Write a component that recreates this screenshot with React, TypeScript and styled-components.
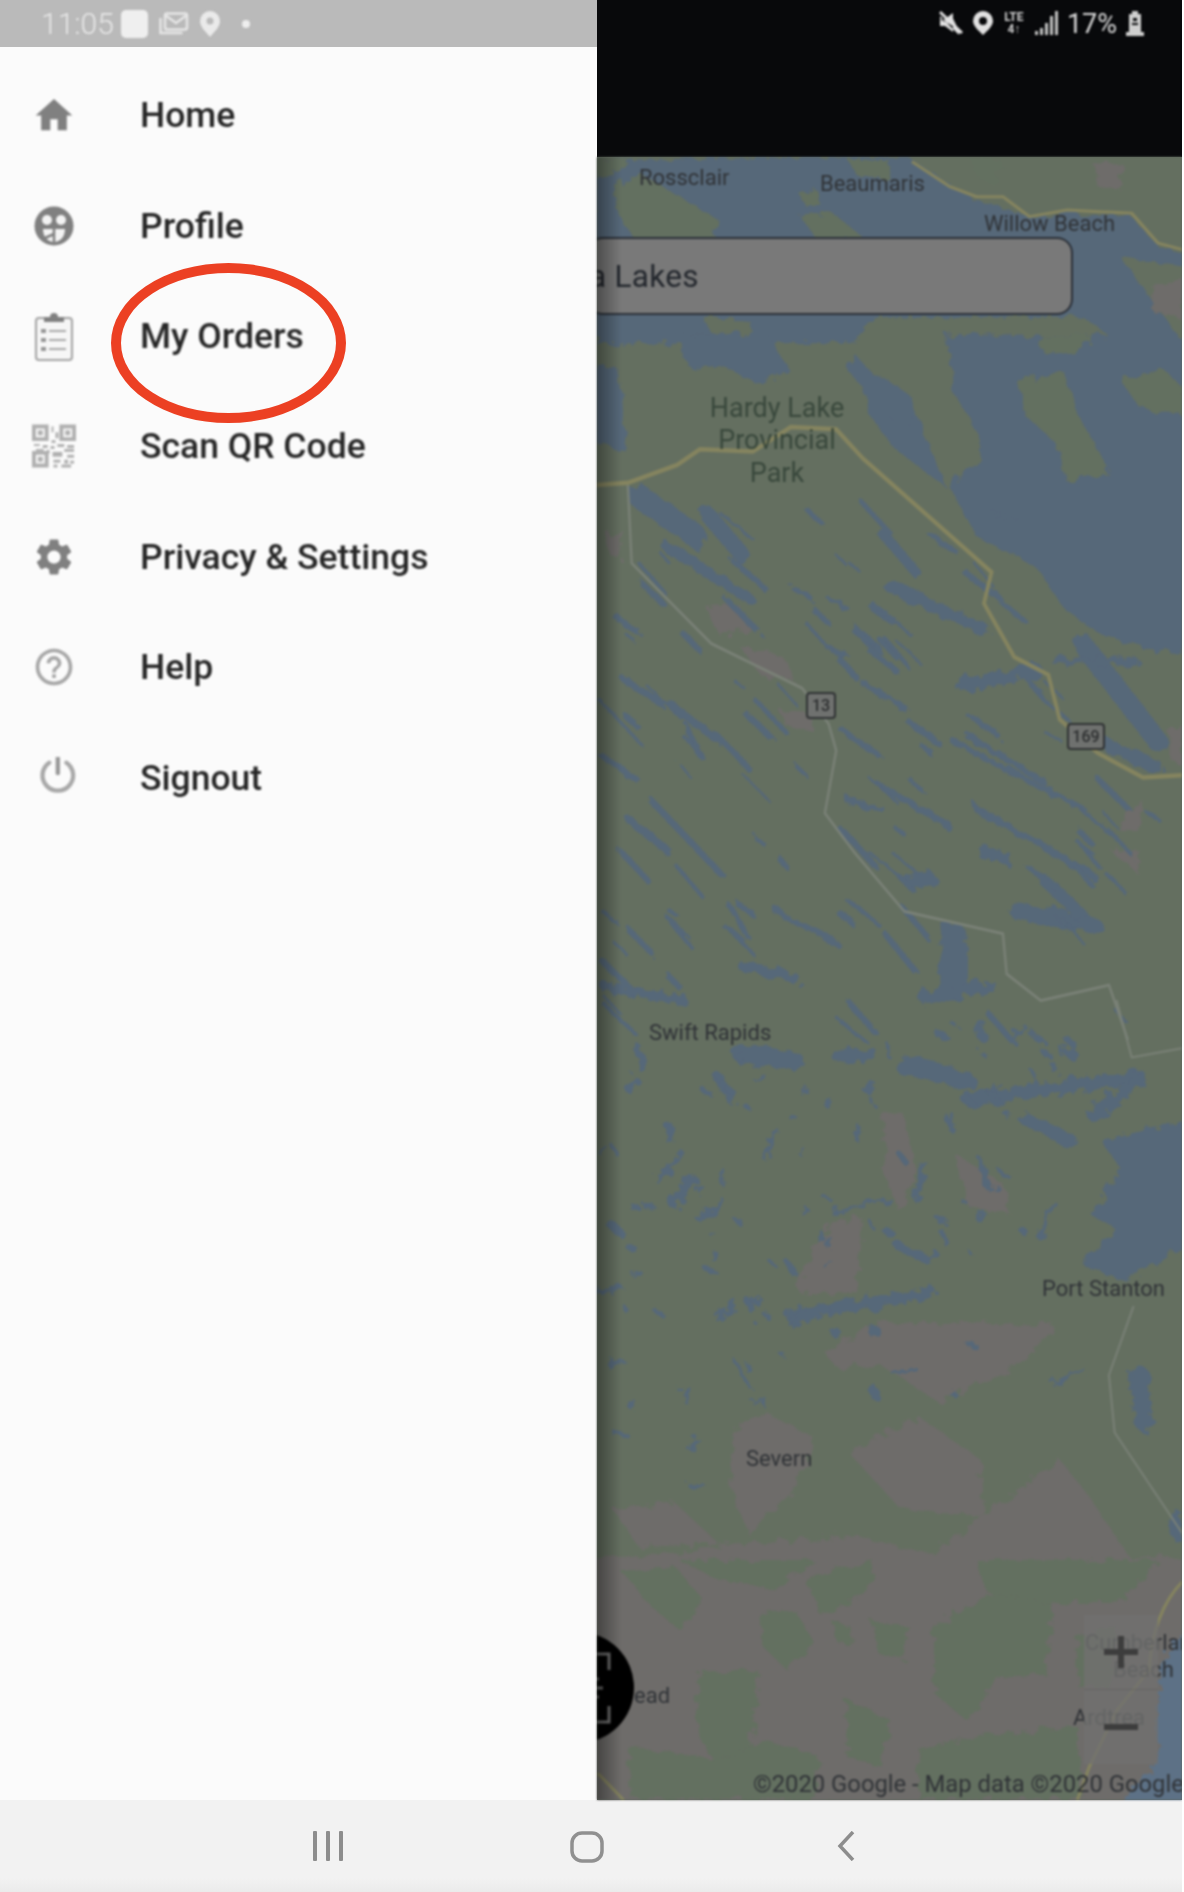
import styled, { createGlobalStyle } from "styled-components";
import { MdHome, MdSettings, MdHelpOutline } from "react-icons/md";
import type { ReactNode } from "react";

const WATER = "#566779";
const LAND = "#646f60";
const GREY = "#6e6c6a";
const ROAD = "#85845f";
const TRACK = "#7b8278";
const ICON = "#808080";

const GlobalStyle = createGlobalStyle`
  html, body { margin: 0; padding: 0; background: #ffffff; }
  body { font-family: Roboto, "Liberation Sans", sans-serif; }
`;

function ProfileIcon() {
  return (
    <svg width="40" height="40" viewBox="0 0 40 40">
      <circle cx="20" cy="20" r="19.5" fill={ICON} />
      <circle cx="13" cy="14" r="5" fill="#f3f3f3" />
      <circle cx="27" cy="14" r="5" fill="#f3f3f3" />
      <path d="M9 23h22c0 8-5 13-11 13S9 31 9 23z" fill="#f3f3f3" />
      <path d="M20 23v14M20 28l-9 4" stroke={ICON} strokeWidth="2.5" fill="none" />
    </svg>
  );
}

function OrdersIcon() {
  return (
    <svg width="40" height="50" viewBox="0 0 40 50">
      <rect x="2" y="7" width="36" height="42" rx="3" fill="#f6f6f6" stroke="#a2a2a2" strokeWidth="2" />
      <path d="M10 11V6h6a4 4 0 0 1 8 0h6v5z" fill={ICON} />
      {[20, 29, 38].map((y) => (
        <g key={y}>
          <rect x="7" y={y - 2} width="5" height="4" fill="#969696" />
          <rect x="15" y={y - 1} width="17" height="2" fill="#a8a8a8" />
        </g>
      ))}
    </svg>
  );
}

function QrIcon() {
  const bits = [
    [20, 2, 2, 6], [24, 8, 3, 6], [20, 16, 4, 3], [2, 20, 6, 2], [11, 21, 5, 3], [19, 22, 4, 3],
    [26, 20, 7, 3], [36, 21, 7, 3], [4, 25, 8, 2], [15, 26, 3, 4], [33, 25, 10, 3], [21, 28, 10, 5],
    [36, 31, 7, 3], [22, 36, 7, 3], [33, 36, 4, 4], [39, 37, 4, 3], [22, 41, 4, 3], [30, 41, 10, 3],
  ];
  return (
    <svg width="45" height="44" viewBox="0 0 45 44" fill="#b0b0b0">
      <path fillRule="evenodd" d="M0 0h17v17H0zM4 4v9h9V4z" />
      <rect x="6" y="6" width="5" height="5" />
      <path fillRule="evenodd" d="M28 0h17v17H28zM32 4v9h9V4z" />
      <rect x="34" y="6" width="5" height="5" />
      <path fillRule="evenodd" d="M0 27h17v17H0zM4 31v9h9v-9z" />
      <rect x="6" y="33" width="5" height="5" />
      {bits.map(([x, y, w, h]) => (
        <rect key={`${x}-${y}`} x={x} y={y} width={w} height={h} />
      ))}
    </svg>
  );
}

function PowerIcon() {
  return (
    <svg width="46" height="42" viewBox="-8 4 46 42" fill="none" stroke="#a8a8a8" strokeWidth="4.5" strokeLinecap="round">
      <path d="M10 9a16 16 0 1 0 18 0" />
      <path d="M19 3v17" stroke="#989898" />
    </svg>
  );
}

const menu: { label: string; icon: ReactNode }[] = [
  { label: "Home", icon: <MdHome size={45} color={ICON} /> },
  { label: "Profile", icon: <ProfileIcon /> },
  { label: "My Orders", icon: <OrdersIcon /> },
  { label: "Scan QR Code", icon: <QrIcon /> },
  { label: "Privacy & Settings", icon: <MdSettings size={48} color={ICON} /> },
  { label: "Help", icon: <MdHelpOutline size={50} color="#a6a6a6" /> },
  { label: "Signout", icon: <PowerIcon /> },
];

// fixed seed, the lakes should land in the same place on every load
function seeded(seed: number) {
  let s = seed;
  return () => {
    s = (s * 16807) % 2147483647;
    return s / 2147483647;
  };
}

// water as [x1, y1, x2, y2, width], in the coordinates of each map section
const upperStreaks = [
  [700, 60, 830, 180, 40], [130, 350, 280, 440, 55], [310, 390, 400, 480, 40], [200, 460, 420, 580, 25],
  [790, 550, 1040, 650, 30], [770, 430, 860, 520, 25], [750, 600, 800, 630, 20], [530, 550, 580, 575, 10],
  [630, 580, 680, 600, 10], [700, 650, 760, 690, 18], [630, 690, 670, 705, 16], [720, 770, 840, 830, 12],
  [980, 775, 1180, 740, 30], [660, 870, 760, 930, 14], [960, 900, 1300, 1050, 14], [1000, 890, 1200, 990, 14],
  [680, 1030, 770, 1050, 14], [770, 1000, 950, 1090, 16], [1020, 1050, 1330, 1200, 16], [1040, 1150, 1100, 1160, 28],
  [840, 1210, 900, 1210, 30], [1130, 1280, 1330, 1310, 40], [1200, 1210, 1300, 1290, 30], [1300, 680, 1500, 900, 50],
  [1350, 900, 1500, 960, 30], [90, 760, 200, 820, 16], [220, 820, 340, 900, 18], [250, 860, 290, 930, 14],
  [330, 880, 420, 960, 14], [30, 810, 140, 910, 8], [30, 930, 130, 990, 14], [160, 1030, 350, 1200, 16],
  [110, 1080, 200, 1140, 20], [230, 1180, 300, 1250, 10], [100, 1320, 160, 1370, 14], [200, 1290, 250, 1330, 10],
  [370, 1270, 420, 1340, 12], [490, 1280, 650, 1350, 14], [400, 1400, 540, 1430, 24], [40, 1450, 250, 1480, 22],
  [960, 1340, 960, 1450, 70], [880, 1470, 1060, 1450, 30], [1230, 720, 1440, 720, 18], [1060, 390, 1120, 400, 10],
];

const lowerStreaks = [
  [400, 140, 540, 160, 50], [660, 150, 740, 140, 35], [830, 170, 990, 210, 50], [1000, 260, 1450, 200, 35],
  [1150, 310, 1270, 370, 35], [1330, 300, 1450, 210, 35], [530, 825, 900, 765, 30], [540, 840, 620, 810, 30],
  [880, 430, 865, 520, 20], [1030, 420, 1050, 490, 14], [640, 555, 790, 520, 10], [1450, 980, 1460, 1100, 50],
  [1220, 1000, 1300, 965, 10], [270, 470, 220, 530, 30], [130, 130, 140, 180, 22], [340, 200, 370, 260, 22],
  [210, 330, 215, 370, 20], [100, 230, 120, 210, 20], [490, 340, 460, 410, 14], [240, 400, 180, 470, 16],
  [370, 820, 330, 830, 10], [60, 1130, 100, 1140, 12], [260, 1170, 285, 1150, 12], [260, 1265, 300, 1270, 10],
  [810, 640, 890, 680, 22], [1190, 620, 1220, 530, 16], [750, 1020, 750, 1030, 24], [650, 870, 650, 870, 26],
  [750, 860, 750, 870, 26], [380, 790, 350, 830, 18], [100, 640, 115, 650, 20], [60, 590, 80, 610, 24],
  [290, 570, 350, 530, 20], [1260, 130, 1280, 150, 28], [1030, 60, 1030, 90, 24], [1550, 1350, 1550, 1400, 30],
  [380, 940, 420, 1010, 8], [1000, 900, 1020, 905, 12], [800, 975, 860, 965, 12], [960, 1030, 960, 1030, 18],
];

// the many small lakes of the shield country, running north-west to south-east
const upperSmall = (() => {
  const r = seeded(4711);
  const out: number[][] = [];
  while (out.length < 90) {
    const x = 30 + r() * 1500;
    const y = 340 + r() * 1200;
    if (y < x * 1.06 - 590) continue;
    const len = 20 + r() * 70;
    out.push([x, y, x + len, y + len * (0.55 + r() * 0.5), 5 + r() * 11]);
  }
  return out;
})();

const lowerSmall = (() => {
  const r = seeded(90210);
  const out: number[][] = [];
  while (out.length < 80) {
    const x = 30 + r() * 1250;
    const y = 60 + r() * 1000;
    if (x > 650 && y > 700) continue;
    const a = r() * 3.14;
    const len = 6 + r() * 30;
    out.push([x, y, x + Math.cos(a) * len, y + Math.sin(a) * len, 6 + r() * 12]);
  }
  return out;
})();

const lowerGrey = [
  "M380 1120L470 1080 590 1140 560 1250 420 1400 370 1270Z",
  "M680 1180L870 1090 1030 1200 1040 1350 820 1330Z",
  "M60 1330L220 1310 340 1420 130 1430Z",
  "M25 1568L200 1450 380 1420 700 1400 900 1450 1240 1200 1320 1300 1500 1568Z",
  "M770 300L830 300 860 440 820 560 780 460Z",
  "M960 400L1090 480 1110 560 1000 540Z",
  "M540 740L640 580 720 570 700 760 560 770Z",
  "M620 920L760 840 1230 850 1130 960 920 1050 760 950 650 960Z",
];

const lowerBlobs = [
  "M500 160L590 150 640 250 570 330 510 260Z",
  "M350 340L500 330 480 560 380 610 340 470Z",
  "M940 200L1080 100 1240 120 1220 340 1100 360 1020 480 940 400Z",
  "M620 60L700 20 790 0 780 80 660 170Z",
  "M160 40L290 20 360 120 300 210 220 130Z",
  "M1040 0L1500 0 1420 120 1230 130 1080 100Z",
  "M170 560L400 600 520 540 650 590 640 716 180 716Z",
  "M900 570L1040 530 1300 500 1310 716 900 716Z",
  "M300 0L640 0 540 90 400 60Z",
  "M690 190L730 200 730 260 690 240Z",
  "M780 180L880 200 860 300 800 280Z",
  "M1300 230L1400 200 1380 380 1300 380Z",
  "M720 420L830 480 810 620 720 590Z",
];

function Lakes({ items }: { items: number[][] }) {
  return (
    <>
      {items.map(([x1, y1, x2, y2, w]) => (
        <line key={`${x1}-${y1}`} x1={x1} y1={y1} x2={x2} y2={y2} stroke={WATER} strokeWidth={w} strokeLinecap="round" />
      ))}
    </>
  );
}

function Shield({ at, w, label }: { at: number[]; w: number; label: string }) {
  return (
    <g>
      <rect x={at[0] - w / 2} y={at[1] - 12} width={w} height={25} rx="3" fill="#6f716f" stroke="#2f3233" strokeWidth="2" />
      <ShieldText x={at[0]} y={at[1] + 6}>{label}</ShieldText>
    </g>
  );
}

function MapArt() {
  return (
    <MapSvg viewBox="597 157 585 1643" width="585" height="1643">
      <defs>
        <filter id="shore" x="-5%" y="-5%" width="110%" height="110%">
          <feTurbulence type="fractalNoise" baseFrequency="0.035" numOctaves="3" seed="7" />
          <feDisplacementMap in="SourceGraphic" scale="38" />
        </filter>
      </defs>
      <rect x="597" y="157" width="585" height="1643" fill={LAND} />

      {/* top of the map, above the search box */}
      <g transform="translate(590 0) scale(.3788 .3333)">
        <g filter="url(#shore)">
          <path
            fill={WATER}
            d="M15 480L840 470 1000 590 1150 650 1260 640 1430 650 1500 740 1568 760 1568 800 1400 770 1568 1030 1400 1030 1300 950 750 950 700 1030 440 1030 420 960 300 950 330 1030 15 1030Z"
          />
          <path fill={LAND} d="M60 560L130 520 250 600 340 660 330 720 120 720 80 650Z" />
          <path fill={LAND} d="M15 480L110 480 40 530 15 530Z" />
          <path fill={LAND} d="M550 580L600 570 605 610 570 620ZM555 650L640 640 720 710 600 720Z" />
          <path fill={LAND} d="M680 480L790 480 780 540 710 530Z" />
          <path fill={LAND} d="M1000 470L1090 480 1070 560 1020 530Z" opacity=".6" />
          <path fill={GREY} d="M1330 490L1410 490 1400 570 1340 560ZM1480 860L1568 830 1568 950 1490 940Z" />
        </g>
        <path fill="none" stroke={ROAD} strokeWidth="9" d="M850 485L950 560 1020 590 1090 590 1160 650 1260 630 1430 640 1500 730 1568 750" />
      </g>

      {/* middle of the map, the shore and the highways */}
      <g transform="translate(590 340) scale(.3788 .4464)">
        <g filter="url(#shore)">
          <path
            fill={WATER}
            d="M940 -10L1580 -10 1580 690 1500 700 1350 660 1250 600 1180 510 1020 440 950 330 1040 250 1000 170 960 120Z"
          />
          <path fill={WATER} d="M230 -10L470 -10 530 70 440 95 340 60 260 60Z" />
          <path fill={WATER} d="M15 50L80 70 95 250 15 230Z" />
          <path fill={LAND} d="M1130 90L1250 70 1290 170 1370 290 1260 320 1230 230 1150 170Z" />
          <path fill={LAND} d="M1400 90L1520 70 1568 110 1568 170 1450 150Z" />
          <path fill={LAND} d="M1190 -10L1330 -10 1280 30 1200 30Z" />
          <path fill={WATER} d="M700 50L840 120 940 330 800 240 740 170Z" />
          <path fill={GREY} d="M310 600L390 590 430 650 340 660ZM400 690L510 710 545 770 450 750ZM500 830L590 840 570 875 520 870ZM1410 1060L1460 1030 1450 1100 1400 1100ZM1370 1140L1460 1150 1440 1190ZM1530 880L1568 860 1568 950 1530 940ZM40 430L90 430 80 490 50 480Z" />
          <Lakes items={upperStreaks} />
          <Lakes items={upperSmall} />
        </g>
        <path
          fill="none"
          stroke={TRACK}
          strokeWidth="6"
          d="M100 325L110 500 320 680 560 780 630 860 650 920 620 1060 700 1150 830 1280 1090 1330 1100 1420 1190 1480 1370 1445 1420 1568"
        />
        <path
          fill="none"
          stroke={ROAD}
          strokeWidth="10"
          d="M15 325L100 320 230 280 290 245 430 250 530 195 650 200 720 265 900 400 1060 520 1040 590 1120 710 1210 750 1240 850 1340 925 1460 980 1568 975"
        />
      </g>

      {/* lower map */}
      <g transform="translate(590 1000) scale(.3788 .3827)">
        <g filter="url(#shore)">
          {lowerGrey.map((d) => (
            <path key={d} d={d} fill={GREY} />
          ))}
          <path fill={WATER} d="M1580 320L1420 350 1350 370 1400 440 1320 560 1390 600 1300 690 1400 735 1580 640Z" />
          <Lakes items={lowerStreaks} />
          <Lakes items={lowerSmall} />
        </g>
        <path fill="none" stroke={TRACK} strokeWidth="5" d="M1390 0L1430 150 1568 125M1435 800L1370 980 1385 1130 1568 1400" />
      </g>

      {/* bottom of the map, mostly grey land */}
      <g transform="translate(560 1560) scale(.398 .3333)">
        <g filter="url(#shore)">
          <rect x="85" y="-10" width="1500" height="740" fill={GREY} />
          {lowerBlobs.map((d) => (
            <path key={d} d={d} fill={LAND} />
          ))}
          <path fill="#5d7186" d="M1580 200L1510 300 1500 610 1410 730 1580 730Z" />
        </g>
        <path fill="none" stroke={ROAD} strokeWidth="8" d="M1568 60Q1490 150 1480 330L1400 450 1330 620 1300 720M95 640L160 720" />
      </g>

      <Shield at={[821, 705]} w={28} label="13" />
      <Shield at={[1086, 736]} w={36} label="169" />

      <MapText x="639" y="185" size={22}>Rossclair</MapText>
      <MapText x="820" y="191" size={22}>Beaumaris</MapText>
      <MapText x="984" y="231" size={22}>Willow Beach</MapText>
      <ParkText x="777" y="417">Hardy Lake</ParkText>
      <ParkText x="777" y="449">Provincial</ParkText>
      <ParkText x="777" y="482">Park</ParkText>
      <MapText x="649" y="1040" size={22}>Swift Rapids</MapText>
      <MapText x="1042" y="1296" size={22}>Port Stanton</MapText>
      <MapText x="746" y="1466" size={22}>Severn</MapText>
      <MapText x="634" y="1703" size={22}>ead</MapText>
      <MapText x="1085" y="1650" size={22}>Cumberland</MapText>
      <MapText x="1113" y="1677" size={22}>Beach</MapText>
      <MapText x="1073" y="1725" size={22}>Ardtrea</MapText>
      <MapText x="753" y="1792" size={23.8}>©2020 Google - Map data ©2020 Google</MapText>
    </MapSvg>
  );
}

export default function App() {
  return (
    <>
      <GlobalStyle />
      <Screen>
        <Content>
          <Drawer>
            <DrawerStatus>
              <Clock>11:05</Clock>
              <StatusSquare />
              <svg width="30" height="23" viewBox="0 0 30 23" fill="none" stroke="#e6e6e6" strokeWidth="2.5">
                <rect x="6" y="1.500" width="22" height="16" rx="2" />
                <path d="M6 3l11 8 11-8" />
                <path d="M1.500 6v15h22" />
              </svg>
              <PinGap>
                <svg width="20" height="26" viewBox="0 0 20 26">
                  <path fillRule="evenodd" fill="#eaeaea" d="M10 0a10 10 0 0 1 10 10c0 6-6 11-10 16C6 21 0 16 0 10A10 10 0 0 1 10 0zm0 6.500a3.500 3.500 0 1 0 0 7 3.500 3.500 0 0 0 0-7z" />
                </svg>
              </PinGap>
              <StatusDot />
            </DrawerStatus>
            <Menu>
              {menu.map((item) => (
                <MenuRow key={item.label}>
                  <MenuIcon>{item.icon}</MenuIcon>
                  <MenuLabel>{item.label}</MenuLabel>
                </MenuRow>
              ))}
            </Menu>
          </Drawer>

          <MapColumn>
            <MapHeader>
              <HeaderIcons>
                <svg width="26" height="24" viewBox="0 0 26 24" fill="#e2e2e2">
                  <path d="M2 8h5l8-6v5.500L22 22l-1.500 1.500L2 5zM2 8v7h5l8 6v-6z" />
                  <path d="M1 2l2-2 22 21-2 2z" fill="#e2e2e2" />
                </svg>
                <svg width="20" height="24" viewBox="0 0 20 24">
                  <path fillRule="evenodd" fill="#e2e2e2" d="M10 0a10 10 0 0 1 10 10c0 5-6 10-10 14C6 20 0 15 0 10A10 10 0 0 1 10 0zm0 6a4 4 0 1 0 0 8 4 4 0 0 0 0-8z" />
                </svg>
                <NetworkType>
                  <span>LTE</span>
                  <span>4↑</span>
                </NetworkType>
                <svg width="23" height="24" viewBox="0 0 23 24" fill="#c4c4c4">
                  <rect x="0" y="20" width="3" height="4" />
                  <rect x="5" y="17" width="3" height="7" />
                  <rect x="10" y="12" width="3" height="12" />
                  <rect x="15" y="5" width="3" height="19" />
                  <rect x="20" y="0" width="3" height="24" />
                </svg>
                <Battery>17%</Battery>
                <svg width="18" height="25" viewBox="0 0 18 25" fill="#cfcfcf">
                  <rect x="6" y="0" width="6" height="3" />
                  <path d="M3 3h12v18H3zM7 7h4v3H7zM6 12h6v2H6z" fillRule="evenodd" />
                  <rect x="0" y="21" width="18" height="4" />
                </svg>
              </HeaderIcons>
            </MapHeader>
            <MapArea>
              <MapArt />
              <SearchBox>
                <SearchText>a Lakes</SearchText>
              </SearchBox>
              <ScanFab>
                <svg width="20" height="72" viewBox="0 0 20 72" fill="none" stroke="#6d6d6d" strokeWidth="3">
                  <path d="M0 2h18v16M0 70h18V54M0 27h8M0 36h12M0 45h8" />
                </svg>
              </ScanFab>
              <ZoomControl>
                <ZoomButton>
                  <svg width="34" height="32" viewBox="0 0 34 32" fill="#3d3d3d">
                    <rect x="0" y="13" width="34" height="6" />
                    <rect x="14" y="0" width="6" height="32" />
                  </svg>
                </ZoomButton>
                <ZoomButton>
                  <svg width="34" height="6" viewBox="0 0 34 6" fill="#3d3d3d">
                    <rect x="0" y="0" width="34" height="6" />
                  </svg>
                </ZoomButton>
              </ZoomControl>
              <DrawerShadow />
            </MapArea>
          </MapColumn>
        </Content>

        <NavBar>
          <NavSlot>
            <svg width="30" height="30" viewBox="0 0 30 30" fill="#8d8d8d">
              <rect x="0" y="0" width="4" height="30" rx="1" />
              <rect x="13" y="0" width="4" height="30" rx="1" />
              <rect x="26" y="0" width="4" height="30" rx="1" />
            </svg>
          </NavSlot>
          <NavSlot>
            <svg width="34" height="32" viewBox="0 0 34 32" fill="none" stroke="#909090" strokeWidth="3.500">
              <rect x="2" y="2" width="30" height="28" rx="10" />
            </svg>
          </NavSlot>
          <NavSlot>
            <svg width="18" height="30" viewBox="0 0 18 30" fill="none" stroke="#8d8d8d" strokeWidth="3.500">
              <path d="M16 1L3 15l13 14" />
            </svg>
          </NavSlot>
        </NavBar>
        <Annotation />
      </Screen>
    </>
  );
}

const Screen = styled.div`
  position: relative;
  display: flex;
  flex-direction: column;
  width: 1182px;
  height: 1892px;
  overflow: hidden;
`;

const Content = styled.div`
  display: flex;
  height: 1800px;
`;

const Drawer = styled.div`
  width: 597px;
  flex-shrink: 0;
  background: #fbfbfb;
`;

const DrawerStatus = styled.div`
  height: 47px;
  display: flex;
  align-items: center;
  padding-left: 41px;
  background: #bababa;

  & > * {
    filter: blur(0.9px);
  }
`;

const Clock = styled.span`
  width: 80px;
  font-size: 30px;
  font-weight: 300;
  color: #e8e8e8;
`;

const StatusSquare = styled.span`
  width: 27px;
  height: 28px;
  margin-right: 11px;
  border-radius: 5px;
  background: #efefef;
`;

const PinGap = styled.span`
  display: flex;
  margin-left: 11px;
`;

const StatusDot = styled.span`
  width: 8px;
  height: 8px;
  margin-left: 22px;
  border-radius: 50%;
  background: #eeeeee;
`;

const Menu = styled.nav`
  display: flex;
  flex-direction: column;
  padding-top: 13px;
`;

const MenuRow = styled.div`
  display: flex;
  align-items: center;
  height: 110.4px;
  padding-left: 32px;
  filter: blur(0.9px);
`;

const MenuIcon = styled.div`
  display: flex;
  align-items: center;
  justify-content: center;
  width: 44px;
  margin-right: 64px;
`;

const MenuLabel = styled.span`
  font-size: 35.5px;
  font-weight: 500;
  color: #262626;
`;

const MapColumn = styled.div`
  display: flex;
  flex: 1;
  flex-direction: column;
  min-width: 0;
  background: #5b655c;
`;

const MapHeader = styled.div`
  display: flex;
  height: 157px;
  flex-shrink: 0;
  box-sizing: border-box;
  padding: 11px 38px 0 0;
  justify-content: flex-end;
  align-items: flex-start;
  background: #08090b;
`;

const HeaderIcons = styled.div`
  display: flex;
  gap: 9px;
  align-items: flex-start;
  filter: blur(0.9px);
`;

const NetworkType = styled.span`
  display: flex;
  flex-direction: column;
  width: 24px;
  font-size: 12px;
  font-weight: 700;
  line-height: 12px;
  text-align: center;
  color: #d2d2d2;
`;

const Battery = styled.span`
  font-size: 27px;
  line-height: 26px;
  color: #dcdcdc;
`;

const MapArea = styled.div`
  position: relative;
  flex: 1;
  overflow: hidden;
  filter: blur(0.9px);
`;

const MapSvg = styled.svg`
  display: block;
  filter: blur(0.6px);
`;

const MapText = styled.text<{ size: number }>`
  font-family: Roboto, sans-serif;
  font-size: ${({ size }) => size}px;
  fill: #303337;
`;

const ParkText = styled.text`
  font-family: Roboto, sans-serif;
  font-size: 27px;
  text-anchor: middle;
  fill: #39483c;
`;

const ShieldText = styled.text`
  font-family: Roboto, sans-serif;
  font-size: 16px;
  font-weight: 500;
  text-anchor: middle;
  fill: #2c2e2f;
`;

const SearchBox = styled.div`
  position: absolute;
  top: 80px;
  left: -10px;
  display: flex;
  align-items: center;
  box-sizing: border-box;
  width: 486px;
  height: 78px;
  border: 2px solid #2b3038;
  border-radius: 16px;
  background: #797979;
`;

const SearchText = styled.span`
  margin-left: 0;
  font-size: 31.5px;
  letter-spacing: 0.3px;
  color: #23272d;
`;

const ScanFab = styled.div`
  position: absolute;
  top: 1475px;
  left: -74px;
  display: flex;
  align-items: center;
  justify-content: center;
  box-sizing: border-box;
  width: 111px;
  height: 111px;
  padding-left: 44px;
  border-radius: 50%;
  background: #000000;
`;

const ZoomControl = styled.div`
  position: absolute;
  top: 1458px;
  left: 487px;
  display: flex;
  flex-direction: column;
  width: 74px;
  height: 149px;
  background: rgba(112, 113, 111, 0.8);
`;

const ZoomButton = styled.div`
  flex: 1;
  display: flex;
  align-items: center;
  justify-content: center;

  & + & {
    border-top: 1px solid rgba(0, 0, 0, 0.1);
  }
`;

const DrawerShadow = styled.div`
  position: absolute;
  inset: 0 auto 0 0;
  width: 24px;
  background: linear-gradient(to right, rgba(0, 0, 0, 0.36), rgba(0, 0, 0, 0));
`;

const NavBar = styled.div`
  display: flex;
  flex: 1;
  align-items: flex-start;
  justify-content: center;
  padding: 31px 8px 0 0;
  background: linear-gradient(to bottom, #f2f2f2 85%, #ebebeb);
`;

const NavSlot = styled.div`
  display: flex;
  justify-content: center;
  width: 259px;
  filter: blur(0.7px);
`;

const Annotation = styled.div`
  position: absolute;
  top: 263px;
  left: 111px;
  box-sizing: border-box;
  width: 235px;
  height: 160px;
  border: 10px solid #ec4023;
  border-radius: 50%;
`;
